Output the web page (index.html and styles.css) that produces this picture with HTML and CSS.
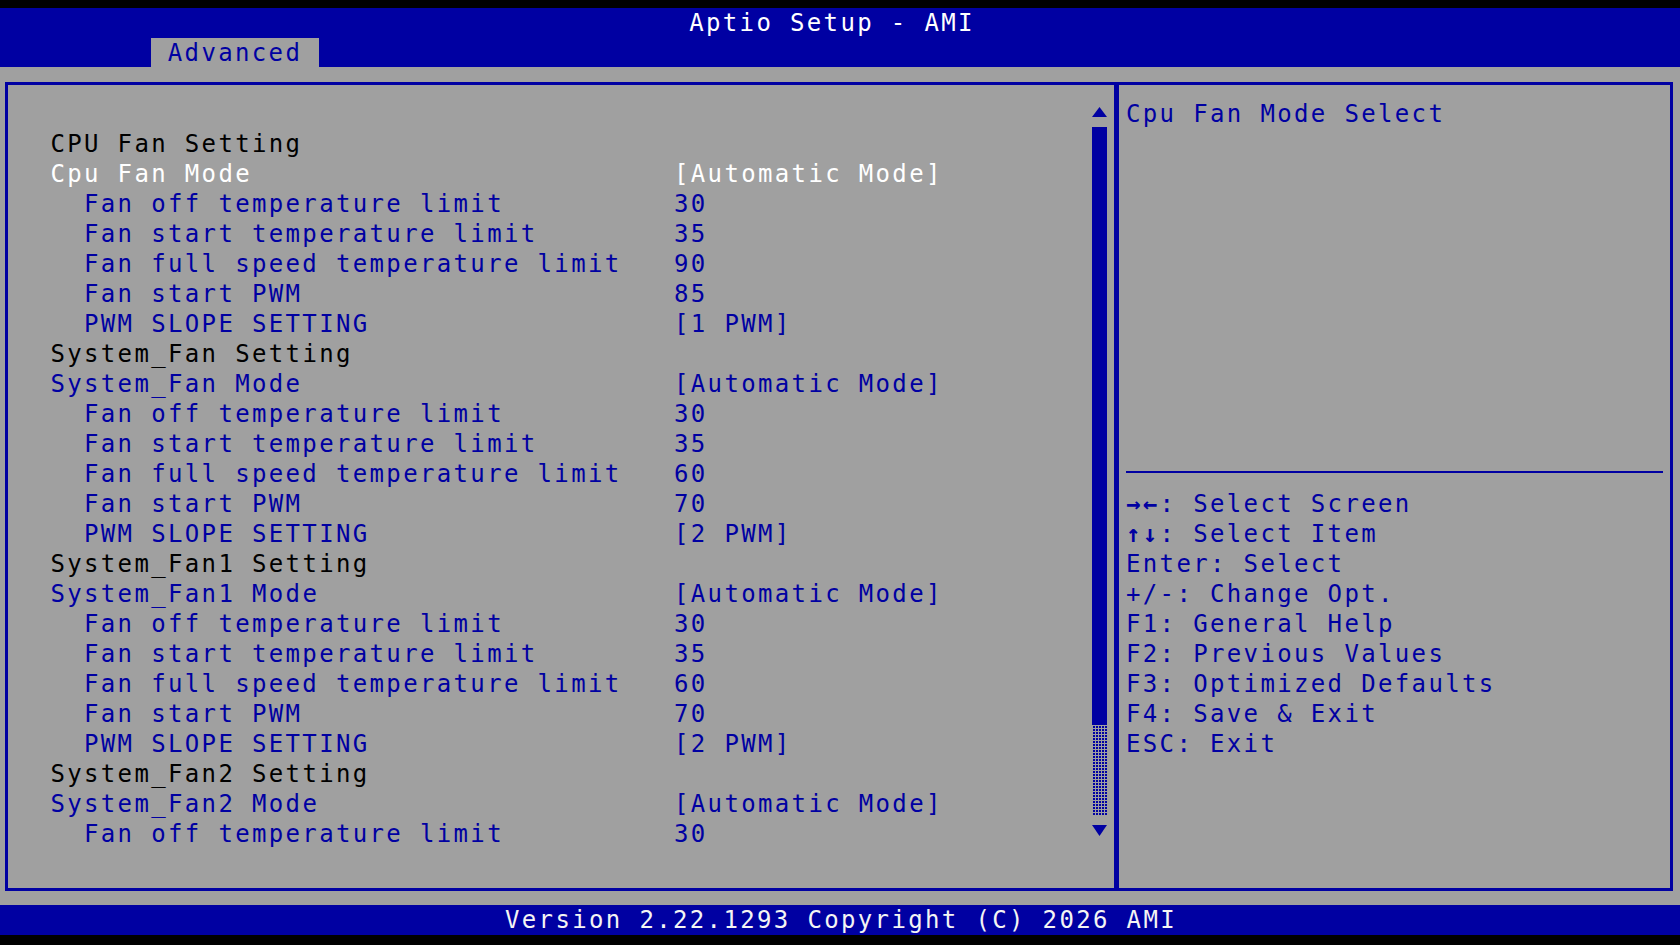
FILE: index.html
```html
<!DOCTYPE html>
<html lang="en">
<head>
    <meta charset="UTF-8">
    <meta name="viewport" content="width=device-width, initial-scale=1.0">
    <title>Aptio Setup - AMI</title>
    <link rel="stylesheet" href="styles.css">
</head>
<body>
    <div class="screen">
        <header class="topbar">
            <div class="title">Aptio Setup - AMI</div>
            <nav class="tabs">
                <span class="tab active">Advanced</span>
            </nav>
        </header>

        <main class="workspace">
            <div class="frame">
                <section class="settings">
                    <div class="rows">
                        <div class="row group"><span class="label">CPU Fan Setting</span></div>
                        <div class="row selected"><span class="label">Cpu Fan Mode</span><span class="value">[Automatic Mode]</span></div>
                        <div class="row sub"><span class="label">Fan off temperature limit</span><span class="value">30</span></div>
                        <div class="row sub"><span class="label">Fan start temperature limit</span><span class="value">35</span></div>
                        <div class="row sub"><span class="label">Fan full speed temperature limit</span><span class="value">90</span></div>
                        <div class="row sub"><span class="label">Fan start PWM</span><span class="value">85</span></div>
                        <div class="row sub"><span class="label">PWM SLOPE SETTING</span><span class="value">[1 PWM]</span></div>

                        <div class="row group"><span class="label">System_Fan Setting</span></div>
                        <div class="row"><span class="label">System_Fan Mode</span><span class="value">[Automatic Mode]</span></div>
                        <div class="row sub"><span class="label">Fan off temperature limit</span><span class="value">30</span></div>
                        <div class="row sub"><span class="label">Fan start temperature limit</span><span class="value">35</span></div>
                        <div class="row sub"><span class="label">Fan full speed temperature limit</span><span class="value">60</span></div>
                        <div class="row sub"><span class="label">Fan start PWM</span><span class="value">70</span></div>
                        <div class="row sub"><span class="label">PWM SLOPE SETTING</span><span class="value">[2 PWM]</span></div>

                        <div class="row group"><span class="label">System_Fan1 Setting</span></div>
                        <div class="row"><span class="label">System_Fan1 Mode</span><span class="value">[Automatic Mode]</span></div>
                        <div class="row sub"><span class="label">Fan off temperature limit</span><span class="value">30</span></div>
                        <div class="row sub"><span class="label">Fan start temperature limit</span><span class="value">35</span></div>
                        <div class="row sub"><span class="label">Fan full speed temperature limit</span><span class="value">60</span></div>
                        <div class="row sub"><span class="label">Fan start PWM</span><span class="value">70</span></div>
                        <div class="row sub"><span class="label">PWM SLOPE SETTING</span><span class="value">[2 PWM]</span></div>

                        <div class="row group"><span class="label">System_Fan2 Setting</span></div>
                        <div class="row"><span class="label">System_Fan2 Mode</span><span class="value">[Automatic Mode]</span></div>
                        <div class="row sub"><span class="label">Fan off temperature limit</span><span class="value">30</span></div>
                    </div>

                    <div class="scrollbar">
                        <svg class="arrow" width="15" height="10" viewBox="0 0 15 10"><polygon points="7.5,0 15,10 0,10" /></svg>
                        <div class="track">
                            <div class="thumb"></div>
                            <div class="rest"></div>
                        </div>
                        <svg class="arrow" width="15" height="11" viewBox="0 0 15 11"><polygon points="0,0 15,0 7.5,11" /></svg>
                    </div>
                </section>

                <aside class="help">
                    <div class="help-text">Cpu Fan Mode Select</div>
                    <div class="help-sep"></div>
                    <ul class="keys">
                        <li><b>&rarr;&larr;</b>: Select Screen</li>
                        <li><b>&uarr;&darr;</b>: Select Item</li>
                        <li>Enter: Select</li>
                        <li>+/-: Change Opt.</li>
                        <li>F1: General Help</li>
                        <li>F2: Previous Values</li>
                        <li>F3: Optimized Defaults</li>
                        <li>F4: Save &amp; Exit</li>
                        <li>ESC: Exit</li>
                    </ul>
                </aside>
            </div>
        </main>

        <footer class="status">Version 2.22.1293 Copyright (C) 2026 AMI</footer>
    </div>
</body>
</html>
```

FILE: styles.css
```css
* {
    margin: 0;
    padding: 0;
    box-sizing: border-box;
}

/* one text cell of the setup screen is 16.8px wide and 30px tall */
body {
    background: #000;
    width: 1680px;
    height: 945px;
    overflow: hidden;
    font-family: "DejaVu Sans Mono", "Liberation Mono", monospace;
    font-size: 24px;
    letter-spacing: 2.35px;
    line-height: 30px;
}

.screen {
    display: flex;
    flex-direction: column;
    height: 945px;
    padding: 8px 0 10px;
}

.topbar {
    background: #0000a2;
    height: 59px;
    display: flex;
    flex-direction: column;
}

.title {
    height: 30px;
    color: #fff;
    text-align: center;
    padding-right: 16px;
}

.tabs {
    display: flex;
    height: 29px;
    padding-left: 151px;
}

.tab {
    width: 168px;
    line-height: 29px;
    padding-top: 1px;
    text-align: center;
    color: #0000a2;
}

.tab.active {
    background: #a0a0a0;
}

.workspace {
    flex: 1;
    background: #a0a0a0;
    padding: 15px 7px 14px 5px;
    display: flex;
}

.frame {
    flex: 1;
    display: flex;
    border: 3px solid #0000a2;
}

.settings {
    width: 1106px;
    display: flex;
}

.rows {
    flex: 1;
    padding: 43.5px 0 0 42.4px;
}

.row {
    display: grid;
    grid-template-columns: 621.6px auto;
    height: 30px;
    white-space: nowrap;
    color: #0000a2;
}

.row.group {
    color: #000;
}

.row.selected {
    color: #fff;
}

.row.sub .label {
    padding-left: 33.6px;
}

.row .value {
    padding-left: 2px;
}

.scrollbar {
    width: 15px;
    margin-right: 7px;
    padding-top: 22px;
    display: flex;
    flex-direction: column;
    gap: 10px;
}

.arrow {
    display: block;
    fill: #0000a2;
}

.track {
    height: 688px;
    display: flex;
    flex-direction: column;
}

.thumb {
    height: 598px;
    background: #0000a2;
}

.rest {
    flex: 1;
    background-color: #0000a2;
    background-image:
        linear-gradient(90deg, #a0a0a0 1px, transparent 1px),
        linear-gradient(#a0a0a0 1px, transparent 1px);
    background-size: 3px 3px;
}

.help {
    flex: 1;
    border-left: 5px solid #0000a2;
    padding: 13.5px 0 0 7px;
    color: #0000a2;
    white-space: nowrap;
}

.help-text {
    height: 360px;
}

.help-sep {
    width: 537px;
    height: 2px;
    margin: 12px 0 16px;
    background: #0000a2;
}

.keys {
    list-style: none;
}

.keys li {
    height: 30px;
}

.status {
    background: #0000a2;
    height: 30px;
    color: #f4f4f4;
    text-align: center;
    padding-left: 2px;
}
```
